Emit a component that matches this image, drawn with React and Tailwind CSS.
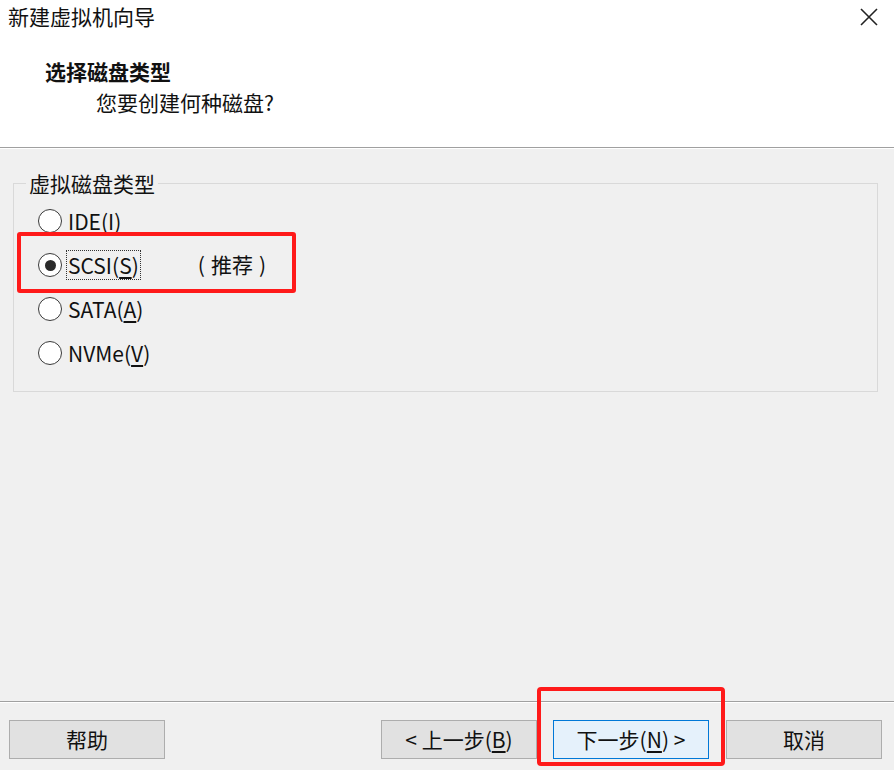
import React from 'react';

const font = { fontFamily: '"Noto Sans CJK SC", "Noto Sans", sans-serif' };

function Radio({ checked, label, mnemonic, children, focused }) {
  return (
    <div className="flex items-center h-[44px]">
      <div className="ml-[24px] w-[24px] h-[24px] rounded-full border border-[#3a3a3a] bg-white flex items-center justify-center">
        {checked && <div className="w-[11px] h-[11px] rounded-full bg-[#2b2b2b]" />}
      </div>
      <span
        className={`ml-[5px] px-[1px] leading-[28px] ${
          focused ? 'outline outline-1 outline-dotted outline-[#333]' : ''
        }`}
      >
        {label}(<span className="underline underline-offset-[3px]">{mnemonic}</span>)
      </span>
      {children}
    </div>
  );
}

function Button({ children, primary }) {
  return (
    <button
      className={`w-[156px] h-[39px] text-[21px] text-[#111] border flex items-center justify-center ${
        primary ? 'border-[#0078d7] bg-[#e5f1fb]' : 'border-[#adadad] bg-[#e1e1e1]'
      }`}
    >
      {children}
    </button>
  );
}

export default function App() {
  return (
    <div className="w-[894px] h-[770px] relative flex flex-col bg-[#f0f0f0] text-[#111] overflow-hidden" style={font}>
      {/* header */}
      <div className="h-[147px] bg-white flex flex-col">
        <div className="h-[34px] flex items-center justify-between pl-[8px] pr-[16px]">
          <span className="text-[21px]">新建虚拟机向导</span>
          <svg width="18" height="18" viewBox="0 0 18 18">
            <path d="M1 1 L17 17 M17 1 L1 17" stroke="#222" strokeWidth="1.6" />
          </svg>
        </div>
        <div className="pl-[45px] pt-[22px] text-[21px] font-bold leading-[30px]">选择磁盘类型</div>
        <div className="pl-[96px] text-[21px] leading-[32px]">您要创建何种磁盘?</div>
      </div>
      <div className="h-[2px] border-t border-[#a0a0a0] bg-white" />

      {/* content */}
      <div className="flex-1 pt-[21px] px-[13px]">
        <fieldset className="w-[865px] h-[222px] border border-[#d9d9d9]">
          <legend className="ml-[12px] px-[3px] text-[21px] leading-[26px]">虚拟磁盘类型</legend>
          <div className="text-[21px] pt-[3px]">
            <Radio label="IDE" mnemonic="I" />
            <Radio label="SCSI" mnemonic="S" checked focused>
              <span className="ml-[58px]">
                (<span className="mx-[6px]">推荐</span>)
              </span>
            </Radio>
            <Radio label="SATA" mnemonic="A" />
            <Radio label="NVMe" mnemonic="V" />
          </div>
        </fieldset>
      </div>

      {/* footer */}
      <div className="h-[2px] border-t border-[#a0a0a0] bg-white" />
      <div className="h-[67px] flex items-start pt-[17px] pl-[9px] pr-[12px]">
        <Button>帮助</Button>
        <div className="flex-1" />
        <Button>
          &lt; 上一步(<span className="underline underline-offset-[3px]">B</span>)
        </Button>
        <div className="w-[16px]" />
        <Button primary>
          下一步(<span className="underline underline-offset-[3px]">N</span>) &gt;
        </Button>
        <div className="w-[17px]" />
        <Button>取消</Button>
      </div>

      {/* annotation boxes */}
      <div className="absolute left-[17px] top-[232px] w-[279px] h-[61px] border-[4px] border-[#ff1a1a] rounded-[3px]" />
      <div className="absolute left-[537px] top-[687px] w-[188px] h-[79px] border-[4px] border-[#ff1a1a] rounded-[4px]" />
    </div>
  );
}
